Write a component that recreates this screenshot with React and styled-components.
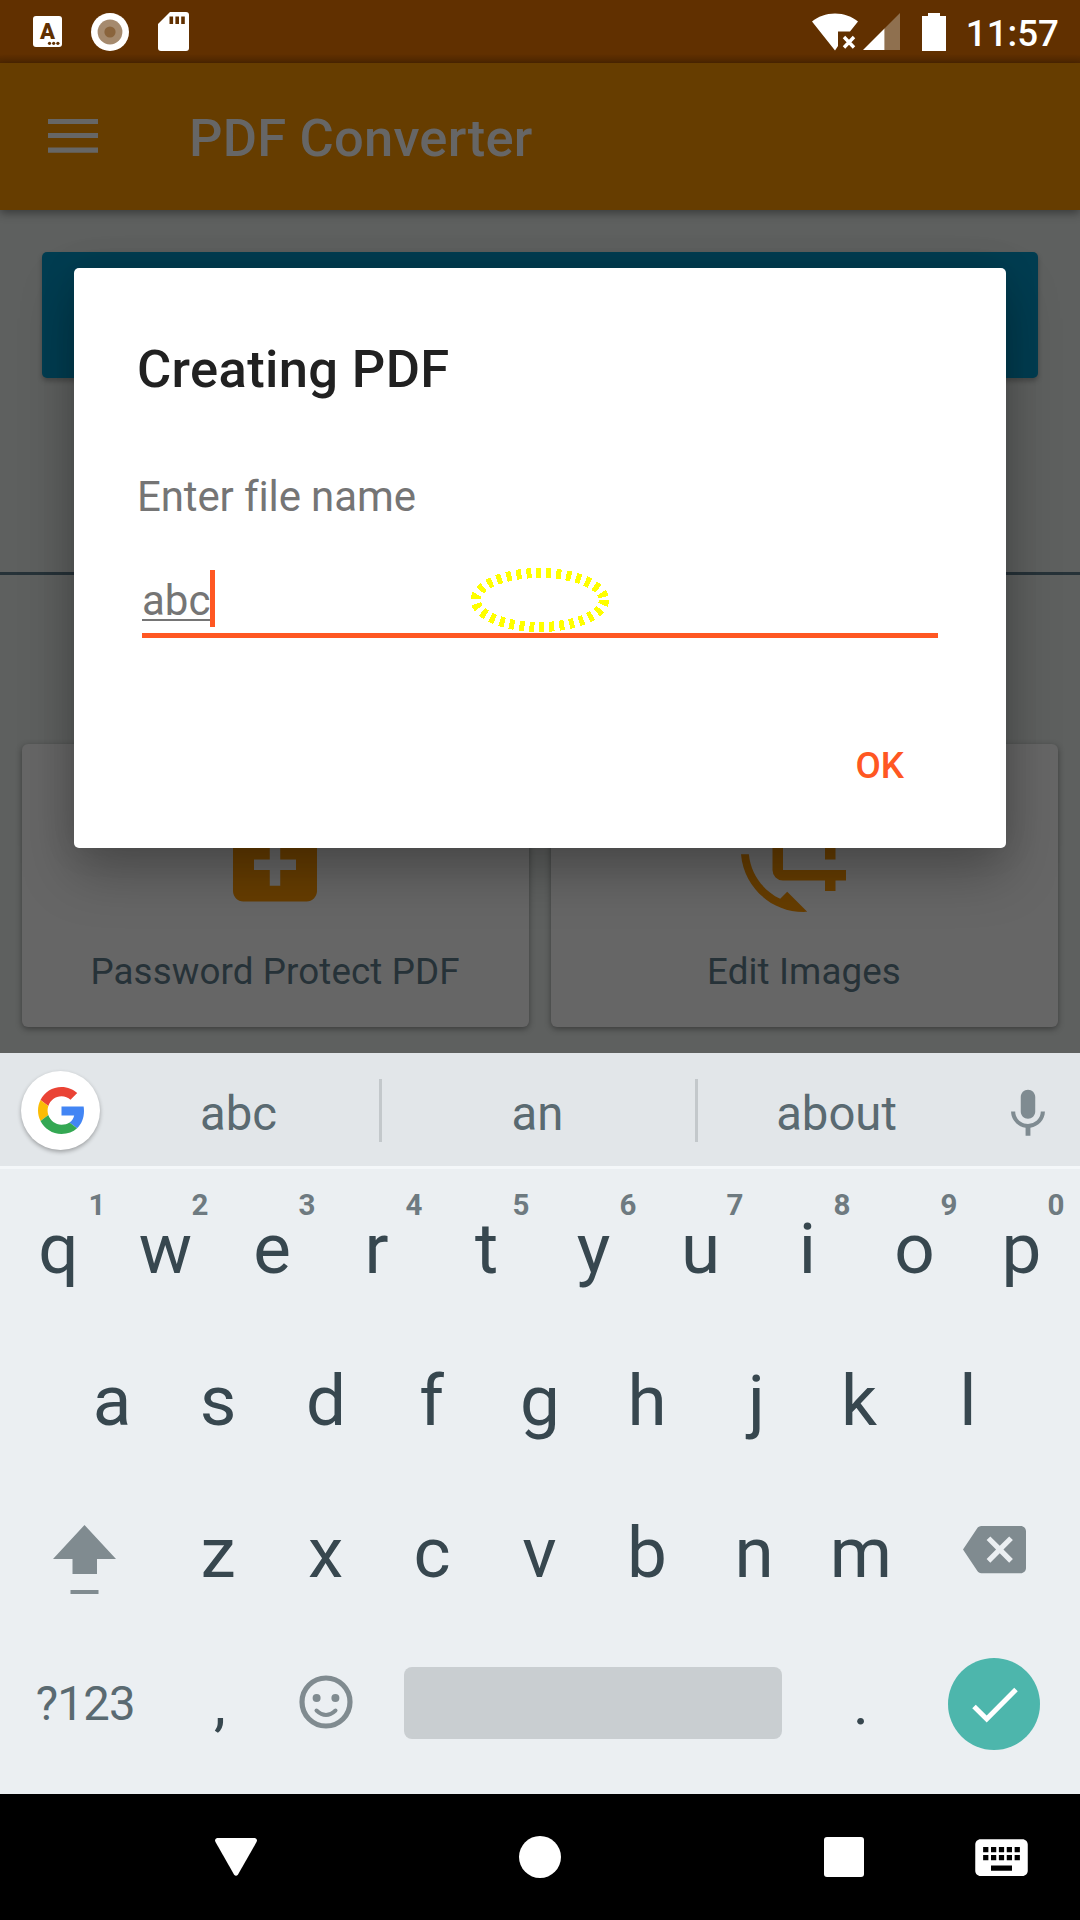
import React from "react";
import styled, { createGlobalStyle } from "styled-components";
import { MdNoteAdd, MdCropRotate, MdKeyboard } from "react-icons/md";

const GlobalStyle = createGlobalStyle`
  *, *::before, *::after { box-sizing: border-box; }
  body { margin: 0; font-family: Roboto, "Noto Sans", sans-serif; }
  svg { display: block; flex: none; }
`;

const Screen = styled.div`
  position: relative;
  width: 1080px;
  height: 1920px;
  display: flex;
  flex-direction: column;
  overflow: hidden;
`;

/* ---------- status bar ---------- */

const StatusBar = styled.header`
  height: 63px;
  flex: none;
  display: flex;
  align-items: center;
  justify-content: space-between;
  padding: 0 21px 0 33px;
  background: linear-gradient(#613000 0 54px, #4f2700 63px);
`;

const Notifications = styled.div`
  display: flex;
  align-items: center;
  gap: 29px;
`;

const SystemIcons = styled.div`
  display: flex;
  align-items: center;
`;

const Clock = styled.span`
  margin-left: 20px;
  padding-top: 5px;
  font-size: 36.75px;
  font-weight: 500;
  line-height: 44px;
  color: #fff;
`;

/* ---------- dimmed app ---------- */

const AppBar = styled.div`
  position: relative;
  z-index: 1;
  height: 147px;
  flex: none;
  display: flex;
  align-items: center;
  gap: 91px;
  padding-left: 48px;
  background: #663d00;
  box-shadow: 0 3px 9px rgba(0, 0, 0, 0.4);
`;

const AppTitle = styled.h1`
  margin: 0;
  padding-top: 3px;
  font-size: 52.5px;
  font-weight: 500;
  line-height: 62px;
  letter-spacing: 0.2px;
  color: #666;
`;

const Content = styled.main`
  height: 843px;
  flex: none;
  display: flex;
  flex-direction: column;
  padding-top: 42px;
  background: #5e605f;
`;

const PrimaryButton = styled.div`
  height: 126px;
  margin: 0 42px;
  border-radius: 5px;
  background: #003d51;
  box-shadow: 0 3px 5px rgba(0, 0, 0, 0.25);
`;

const Divider = styled.div`
  height: 3px;
  margin-top: 194px;
  background: #263238;
`;

const CardRow = styled.div`
  display: grid;
  grid-template-columns: 507px 507px;
  justify-content: center;
  gap: 22px;
  margin-top: 169px;
`;

const Card = styled.div`
  height: 283px;
  display: flex;
  flex-direction: column;
  align-items: center;
  padding: 42px 1px 0 0;
  border-radius: 6px;
  background: #666;
  color: #663d00;
  box-shadow: 0 2px 6px rgba(0, 0, 0, 0.38);
`;

const CardLabel = styled.span`
  margin-top: 38px;
  font-size: 36.75px;
  line-height: 43px;
  letter-spacing: 0.1px;
  color: #263238;
`;

/* ---------- dialog ---------- */

const Dialog = styled.section`
  position: absolute;
  z-index: 2;
  left: 74px;
  top: 268px;
  width: 932px;
  height: 580px;
  padding: 70px 63px 0;
  display: flex;
  flex-direction: column;
  border-radius: 5px;
  background: #fff;
  box-shadow: 0 24px 54px rgba(0, 0, 0, 0.27), 0 0 34px rgba(0, 0, 0, 0.1);
`;

const DialogTitle = styled.h2`
  margin: 0;
  font-size: 52.5px;
  font-weight: 500;
  line-height: 62px;
  letter-spacing: 0.35px;
  color: #212121;
`;

const DialogText = styled.p`
  margin: 72px 0 0;
  font-size: 42px;
  line-height: 50px;
  letter-spacing: -0.12px;
  color: #757575;
`;

const Field = styled.div`
  position: relative;
  display: flex;
  height: 68px;
  margin: 48px 5px 0;
  border-bottom: 5px solid #ff5722;
`;

const FieldValue = styled.span`
  font-size: 42px;
  line-height: 62px;
  color: #757575;
  text-decoration: underline;
  text-decoration-thickness: 2px;
  text-underline-offset: 4px;
  text-decoration-skip-ink: none;
`;

const Caret = styled.span`
  width: 5px;
  height: 57px;
  background: #ff5722;
`;

const TouchMark = styled.svg`
  position: absolute;
  left: 324px;
  top: -6px;
`;

const DialogButton = styled.button`
  align-self: flex-end;
  margin: 103px 39px 0 0;
  padding: 0;
  border: 0;
  background: none;
  font: 500 36.75px/50px Roboto, sans-serif;
  color: #ff5722;
`;

/* ---------- keyboard ---------- */

const Keyboard = styled.div`
  height: 741px;
  flex: none;
  display: flex;
  flex-direction: column;
  background: #ebeff2;
`;

const SuggestionStrip = styled.div`
  height: 116px;
  flex: none;
  display: grid;
  grid-template-columns: 79px 279px 3px 313px 3px 277px 105px;
  align-items: center;
  padding: 2px 0 0 21px;
  border-bottom: 3px solid #f4f7f9;
  background: #e2e6e9;
`;

const GoogleButton = styled.div`
  height: 79px;
  display: flex;
  align-items: center;
  justify-content: center;
  padding-left: 2px;
  border-radius: 50%;
  background: #fff;
  box-shadow: 0 2px 4px rgba(0, 0, 0, 0.3);
`;

const Suggestion = styled.span`
  padding: 7px ${(p) => p.$inset || 0}px 0 0;
  text-align: center;
  font-size: 47.25px;
  line-height: 56px;
  color: #5a6a71;
`;

const Separator = styled.span`
  height: 63px;
  background: #c3c8cb;
`;

const MicCell = styled.div`
  display: flex;
  justify-content: center;
  padding-top: 7px;
`;

const Keys = styled.div`
  padding: 3px 5px 0;
`;

const KeyRow = styled.div`
  height: 152px;
  display: flex;
  justify-content: center;
`;

const Key = styled.div`
  position: relative;
  width: ${(p) => p.$width || 107}px;
  display: flex;
  align-items: center;
  justify-content: center;
  font-size: ${(p) => p.$size || 71}px;
  line-height: 84px;
  letter-spacing: ${(p) => p.$tracking || 0}px;
  color: ${(p) => p.$color || "#37474f"};
`;

const Glyph = styled.span`
  padding-top: ${(p) => p.$drop ?? 2}px;
  margin-left: ${(p) => 2 * (p.$shift || 0)}px;
`;

const Hint = styled.span`
  position: absolute;
  top: 15px;
  left: ${(p) => (p.$narrow ? 82 : 78)}px;
  width: 20px;
  text-align: center;
  font-size: 29.5px;
  font-weight: 700;
  line-height: 36px;
  color: #6e7a80;
`;

const SpaceBar = styled.div`
  width: 378px;
  height: 72px;
  margin: 39px 26px 0 24px;
  border-radius: 8px;
  background: #c9ced1;
`;

const EnterButton = styled.div`
  width: 92px;
  height: 92px;
  margin-right: 2px;
  border-radius: 50%;
  background: #4db6ac;
`;

/* ---------- navigation bar ---------- */

const NavBar = styled.nav`
  height: 126px;
  flex: none;
  display: grid;
  grid-template-columns: 168px 136px 472px 136px 168px;
  align-items: center;
  justify-items: center;
  background: #000;
  color: #fff;
`;

const NavItem = styled.div`
  display: flex;
  grid-column: ${(p) => p.$column};
  padding-left: ${(p) => p.$inset || 0}px;
`;

const FIRST_ROW = "qwertyuiop".split("");
const SECOND_ROW = "asdfghjkl".split("");
const THIRD_ROW = "zxcvbnm".split("");

const LETTER_SHIFT = { r: -3, s: -1, f: -1.5, j: 2.5, k: -2, z: -1, x: -0.5, c: -1, v: -0.5, e: -0.5 };

const LetterKey = ({ letter, children }) => (
  <Key>
    <Glyph $shift={LETTER_SHIFT[letter]}>{letter}</Glyph>
    {children}
  </Key>
);

const LanguageIcon = () => (
  <svg width="29" height="31" viewBox="0 0 29 31">
    <rect width="29" height="31" rx="3" fill="#fff" />
    <text x="14.5" y="23" textAnchor="middle" fontFamily="Roboto" fontWeight="900" fontSize="22" fill="#613000">A</text>
    <g fill="#613000">
      <circle cx="16.5" cy="27.3" r="1.6" />
      <circle cx="20.7" cy="27.3" r="1.6" />
      <circle cx="24.9" cy="27.3" r="1.6" />
    </g>
  </svg>
);

const RecordIcon = () => (
  <svg width="38" height="38" viewBox="0 0 38 38">
    <circle cx="19" cy="19" r="19" fill="#fff" />
    <circle cx="19" cy="19" r="12.4" fill="#a58a6e" />
    <circle cx="19" cy="19" r="5.6" fill="#8a643c" />
  </svg>
);

const SdCardIcon = () => (
  <svg width="31" height="39" viewBox="0 0 31 39">
    <path fill="#fff" d="M12 0h16a3 3 0 0 1 3 3v33a3 3 0 0 1-3 3H3a3 3 0 0 1-3-3V12z" />
    <path fill="#613000" d="M11.5 4.5h3.6V12h-3.6zM17.4 4.5H21V12h-3.6zM23.2 4.5h3.6V12h-3.6z" />
  </svg>
);

const WifiIcon = () => (
  <svg width="46" height="38" viewBox="0 0 46 38">
    <path fill="#fff" d="M0 8.6C6 3.5 14 .5 23 .5s17 3 23 8.1L38 18.5H26V33l-3 4.500z" />
    <path stroke="#fff" strokeWidth="3.4" d="m32 24 10 10.5M42 24 32 34.5" />
  </svg>
);

const SignalIcon = styled.svg`
  margin-left: 5px;
`;

const BatteryIcon = styled.svg`
  margin-left: 22px;
`;

const MenuIcon = styled.svg`
  margin-top: -2px;
`;

const GoogleLogo = () => (
  <svg width="47" height="47" viewBox="0 0 48 48">
    <path fill="#EA4335" d="M24 9.5c3.54 0 6.71 1.22 9.21 3.6l6.85-6.85C35.9 2.38 30.47 0 24 0 14.62 0 6.51 5.38 2.56 13.22l7.98 6.19C12.43 13.72 17.74 9.5 24 9.5z" />
    <path fill="#4285F4" d="M46.98 24.55c0-1.57-.15-3.09-.38-4.55H24v9.02h12.94c-.58 2.96-2.26 5.48-4.78 7.18l7.73 6c4.51-4.18 7.09-10.36 7.09-17.65z" />
    <path fill="#FBBC05" d="M10.53 28.59c-.48-1.45-.76-2.99-.76-4.59s.27-3.14.76-4.59l-7.98-6.19C.92 16.46 0 20.12 0 24c0 3.88.92 7.54 2.56 10.78l7.97-6.19z" />
    <path fill="#34A853" d="M24 48c6.48 0 11.93-2.13 15.89-5.81l-7.73-6c-2.15 1.45-4.92 2.3-8.16 2.3-6.26 0-11.57-4.22-13.47-9.91l-7.98 6.19C6.51 42.62 14.62 48 24 48z" />
  </svg>
);

const MicIcon = () => (
  <svg width="58" height="58" viewBox="0 0 24 24" fill="#7f8b91">
    <path d="M12 14c1.66 0 2.99-1.34 2.99-3L15 5c0-1.66-1.34-3-3-3S9 3.34 9 5v6c0 1.66 1.34 3 3 3zm5.3-3c0 3-2.54 5.1-5.3 5.1S6.7 14 6.7 11H5c0 3.41 2.72 6.23 6 6.72V21h2v-3.28c3.28-.48 6-3.3 6-6.72h-1.7z" />
  </svg>
);

const ShiftIcon = styled.svg`
  margin: 15px 2px 0 0;
`;

const BackspaceIcon = styled.svg`
  margin-top: -5px;
`;

const SmileIcon = styled.svg`
  margin-top: -5px;
`;

const CheckIcon = () => (
  <svg width="92" height="92" viewBox="0 0 92 92" fill="none" stroke="#fff" strokeWidth="5">
    <path d="m26 48.5 12.7 12.5L68 31.5" />
  </svg>
);

export default function App() {
  return (
    <>
      <GlobalStyle />
      <Screen>
        <StatusBar>
          <Notifications>
            <LanguageIcon />
            <RecordIcon />
            <SdCardIcon />
          </Notifications>
          <SystemIcons>
            <WifiIcon />
            <SignalIcon width="37" height="37" viewBox="0 0 37 37">
              <path fill="#8f704f" d="M37 0v37H21.5V15.5z" />
              <path fill="#fff" d="M21.5 15.5V37H0z" />
            </SignalIcon>
            <BatteryIcon width="24" height="38" viewBox="0 0 24 38">
              <path fill="#fff" d="M6 0h12v3h6v35H0V3h6z" />
            </BatteryIcon>
            <Clock>11:57</Clock>
          </SystemIcons>
        </StatusBar>

        <AppBar>
          <MenuIcon width="50" height="34" viewBox="0 0 50 34" fill="#666">
            <path d="M0 0h50v5H0zM0 14h50v5H0zM0 28.500h50v5.300H0z" />
          </MenuIcon>
          <AppTitle>PDF Converter</AppTitle>
        </AppBar>
        <Content>
          <PrimaryButton />
          <Divider />
          <CardRow>
            <Card>
              <MdNoteAdd size={126} />
              <CardLabel>Password Protect PDF</CardLabel>
            </Card>
            <Card>
              <MdCropRotate size={126} />
              <CardLabel>Edit Images</CardLabel>
            </Card>
          </CardRow>
        </Content>

        <Dialog>
          <DialogTitle>Creating PDF</DialogTitle>
          <DialogText>Enter file name</DialogText>
          <Field>
            <FieldValue>abc</FieldValue>
            <Caret />
            <TouchMark width="147" height="72" viewBox="0 0 147 72">
              <ellipse cx="73.8" cy="36" rx="64.2" ry="27" fill="none" stroke="#ff0" strokeWidth="10" strokeDasharray="5 5" shapeRendering="crispEdges" />
            </TouchMark>
          </Field>
          <DialogButton>OK</DialogButton>
        </Dialog>

        <Keyboard>
          <SuggestionStrip>
            <GoogleButton>
              <GoogleLogo />
            </GoogleButton>
            <Suggestion $inset={2}>abc</Suggestion>
            <Separator />
            <Suggestion $inset={2}>an</Suggestion>
            <Separator />
            <Suggestion>about</Suggestion>
            <MicCell>
              <MicIcon />
            </MicCell>
          </SuggestionStrip>
          <Keys>
            <KeyRow>
              {FIRST_ROW.map((letter, i) => (
                <LetterKey key={letter} letter={letter}>
                  <Hint $narrow={i === 0}>{(i + 1) % 10}</Hint>
                </LetterKey>
              ))}
            </KeyRow>
            <KeyRow>
              {SECOND_ROW.map((letter) => (
                <LetterKey key={letter} letter={letter} />
              ))}
            </KeyRow>
            <KeyRow>
              <Key $width={160.5}>
                <ShiftIcon width="63" height="69" viewBox="0 0 63 69" fill="#808b90">
                  <path d="M31.5 0 63 34H44v15H19.5V34H0zM17.5 65h28v4h-28z" />
                </ShiftIcon>
              </Key>
              {THIRD_ROW.map((letter) => (
                <LetterKey key={letter} letter={letter} />
              ))}
              <Key $width={160.5}>
                <BackspaceIcon width="63" height="63" viewBox="0 0 24 24" fill="#808b90">
                  <path d="M22 3H7c-.69 0-1.23.35-1.59.88L0 12l5.41 8.11c.36.53.9.89 1.59.89h15c1.1 0 2-.9 2-2V5c0-1.1-.9-2-2-2zm-3 12.59L17.59 17 14 13.41 10.41 17 9 15.59 12.59 12 9 8.41 10.41 7 14 10.59 17.59 7 19 8.41 15.41 12 19 15.59z" />
                </BackspaceIcon>
              </Key>
            </KeyRow>
            <KeyRow>
              <Key $width={160.5} $size={47.25} $tracking={-0.7} $color="#5a6a71">
                <Glyph $drop={0}>?123</Glyph>
              </Key>
              <Key $size={60}>
                <Glyph $drop={0} $shift={1}>,</Glyph>
              </Key>
              <Key>
                <SmileIcon width="54" height="54" viewBox="0 0 54 54" fill="none" stroke="#808b90">
                  <circle cx="27" cy="27" r="24" strokeWidth="5.2" />
                  <path d="M17.5 35.5q9.5 9 19 0" strokeWidth="4" strokeLinecap="round" />
                  <circle cx="17.6" cy="23" r="4" fill="#808b90" stroke="none" />
                  <circle cx="36.4" cy="23" r="4" fill="#808b90" stroke="none" />
                </SmileIcon>
              </Key>
              <SpaceBar />
              <Key $size={60}>
                <Glyph $drop={0}>.</Glyph>
              </Key>
              <Key $width={160.5}>
                <EnterButton>
                  <CheckIcon />
                </EnterButton>
              </Key>
            </KeyRow>
          </Keys>
        </Keyboard>

        <NavBar>
          <NavItem $column={2}>
            <svg width="42" height="38" viewBox="0 0 42 38" fill="#fff">
              <path d="M2 0h38q3 1 1.5 4L23 36.5q-2 2.5-4 0L.5 4Q-1 1 2 0z" />
            </svg>
          </NavItem>
          <NavItem $column={3}>
            <svg width="42" height="42" viewBox="0 0 42 42" fill="#fff">
              <circle cx="21" cy="21" r="21" />
            </svg>
          </NavItem>
          <NavItem $column={4}>
            <svg width="40" height="40" viewBox="0 0 40 40" fill="#fff">
              <rect width="40" height="40" rx="3" />
            </svg>
          </NavItem>
          <NavItem $column={5} $inset={11}>
            <MdKeyboard size={63} />
          </NavItem>
        </NavBar>
      </Screen>
    </>
  );
}
